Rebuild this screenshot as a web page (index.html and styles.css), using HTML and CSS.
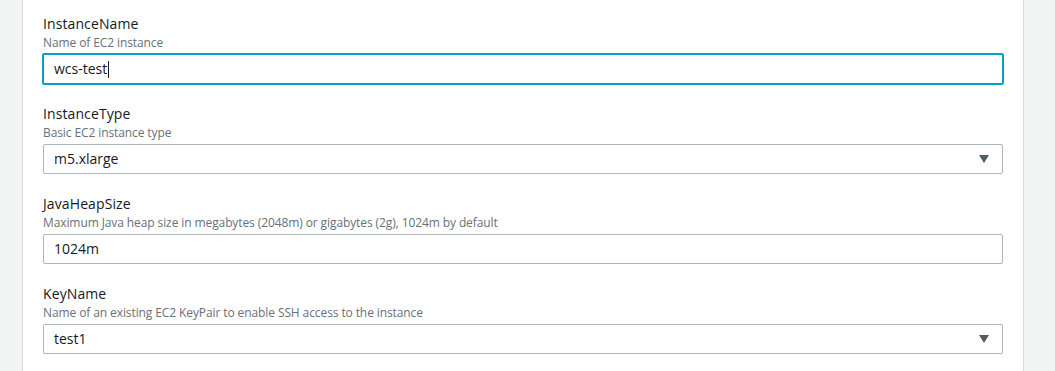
FILE: index.html
```html
<!DOCTYPE html>
<html lang="en">
<head>
  <meta charset="UTF-8">
  <title>Specify stack details</title>
  <link rel="stylesheet" href="styles.css">
</head>
<body>
  <div class="gutter"></div>
  <div class="panel">
    <div class="field">
      <div class="label">InstanceName</div>
      <div class="hint">Name of EC2 instance</div>
      <div class="input focused">wcs-test<span class="caret"></span></div>
    </div>
    <div class="field">
      <div class="label">InstanceType</div>
      <div class="hint">Basic EC2 instance type</div>
      <div class="input select">m5.xlarge<span class="arrow"></span></div>
    </div>
    <div class="field">
      <div class="label">JavaHeapSize</div>
      <div class="hint">Maximum Java heap size in megabytes (2048m) or gigabytes (2g), 1024m by default</div>
      <div class="input">1024m</div>
    </div>
    <div class="field">
      <div class="label">KeyName</div>
      <div class="hint">Name of an existing EC2 KeyPair to enable SSH access to the instance</div>
      <div class="input select">test1<span class="arrow"></span></div>
    </div>
  </div>
</body>
</html>
```
FILE: styles.css
```css
html, body {
  margin: 0;
  height: 100%;
}
body {
  background: #f2f3f3;
  font-family: "Open Sans", "Noto Sans", sans-serif;
  color: #16191f;
  display: flex;
  overflow: hidden;
}
.gutter {
  width: 22px;
  flex: none;
}
.panel {
  width: 960px;
  flex: none;
  background: #fff;
  border-left: 1px solid #d5dbdb;
  border-right: 1px solid #d5dbdb;
  padding: 13px 20px 0;
  display: flex;
  flex-direction: column;
  gap: 19px;
}
.label {
  font-size: 14px;
  line-height: 22px;
  letter-spacing: 0.1px;
}
.hint {
  font-size: 12px;
  line-height: 16px;
  color: #687078;
  letter-spacing: -0.1px;
  margin-bottom: 3px;
}
.input {
  height: 28px;
  border: 1px solid #aab7b8;
  border-radius: 2px;
  padding: 0 10px;
  font-size: 14px;
  line-height: 28px;
  display: flex;
  align-items: center;
}
.input.focused {
  border: 2px solid #00a1c9;
  margin: -1px;
  height: 28px;
}
.caret {
  width: 1px;
  height: 17px;
  background: #16191f;
  margin-left: 1px;
}
.select {
  justify-content: space-between;
}
.arrow {
  width: 0;
  height: 0;
  border-left: 5px solid transparent;
  border-right: 5px solid transparent;
  border-top: 8px solid #545b64;
  margin-right: 3px;
}
```
